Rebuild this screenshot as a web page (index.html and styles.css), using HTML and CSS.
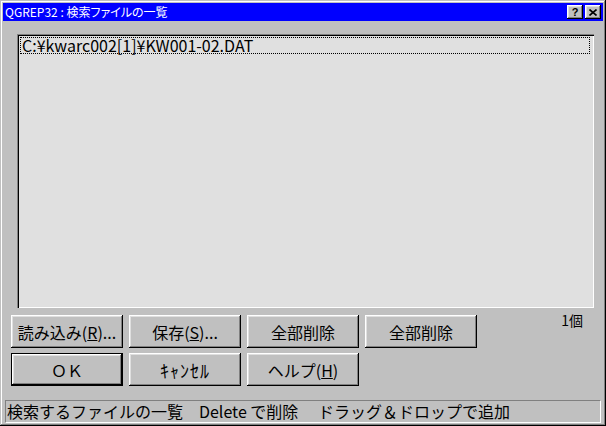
FILE: index.html
```html
<!DOCTYPE html>
<html lang="ja">
<head>
    <meta charset="UTF-8">
    <title>QGREP32 : 検索ファイルの一覧</title>
    <link rel="stylesheet" href="styles.css">
</head>
<body>
    <div class="window">
        <div class="titlebar">
            <span class="title">QGREP32 : 検索ファイルの一覧</span>
            <div class="caption-buttons">
                <span class="cap-btn cap-help">?</span>
                <span class="cap-btn">
                    <svg width="8" height="7" viewBox="0 0 8 7">
                        <path d="M0.5 0.5 L7.5 6.5 M7.5 0.5 L0.5 6.5" stroke="#000" stroke-width="1.6" fill="none"/>
                    </svg>
                </span>
            </div>
        </div>

        <div class="content">
            <ul class="file-list">
                <li class="focused">C:¥kwarc002[1]¥KW001-02.DAT</li>
            </ul>

            <div class="btn-row">
                <button class="btn">読み込み(<u>R</u>)...</button>
                <button class="btn">保存(<u>S</u>)...</button>
                <button class="btn">全部削除</button>
                <button class="btn">全部削除</button>
                <span class="count">1個</span>
            </div>
            <div class="btn-row btn-row-second">
                <button class="btn btn-default">ＯＫ</button>
                <button class="btn btn-hankaku">ｷｬﾝｾﾙ</button>
                <button class="btn">ヘルプ(<u>H</u>)</button>
            </div>
        </div>

        <div class="statusbar">検索するファイルの一覧　Delete で削除　 ドラッグ＆ドロップで追加</div>
    </div>
</body>
</html>
```

FILE: styles.css
```css
* {
    box-sizing: border-box;
}

body {
    margin: 0;
    font-family: "Noto Sans CJK JP", sans-serif;
    background-color: #c0c0c0;
    color: #000;
}

.window {
    width: 606px;
    height: 426px;
    padding: 3px;
    display: flex;
    flex-direction: column;
    background-color: #c0c0c0;
    box-shadow: inset -1px -1px #000, inset 1px 1px #c0c0c0,
                inset -2px -2px #808080, inset 2px 2px #fff;
}

/* title bar */
.titlebar {
    height: 18px;
    background-color: #0000ff;
    color: #fff;
    display: flex;
    align-items: center;
    justify-content: space-between;
    padding: 0 2px 0 2px;
}

.title {
    font-size: 12px;
    line-height: 18px;
    font-feature-settings: "palt";
}

.caption-buttons {
    display: flex;
    gap: 2px;
}

.cap-btn {
    width: 16px;
    height: 14px;
    display: flex;
    align-items: center;
    justify-content: center;
    background-color: #c0c0c0;
    box-shadow: inset -1px -1px #000, inset 1px 1px #fff,
                inset -2px -2px #808080, inset 2px 2px #dfdfdf;
}

.cap-help {
    color: #000;
    font: bold 11px "Liberation Sans", sans-serif;
    line-height: 14px;
}

/* list + buttons */
.content {
    padding: 13px 9px 0 8px;
}

.file-list {
    list-style: none;
    margin: 0 0 0 6px;
    padding: 3px 4px 2px 3px;
    height: 274px;
    background-color: #e0e0e0;
    box-shadow: inset 1px 1px #808080, inset 2px 2px #000,
                inset -1px -1px #fff, inset -2px -2px #dfdfdf;
}

.file-list li {
    height: 17px;
    padding-left: 1px;
    font-size: 16px;
    line-height: 15px;
    white-space: nowrap;
}

.file-list li.focused {
    border: 1px dotted #000;
}

.btn-row {
    display: flex;
    align-items: flex-start;
    gap: 6px;
    margin-top: 7px;
}

.btn-row-second {
    margin-top: 5px;
}

.btn {
    width: 112px;
    height: 33px;
    padding: 0;
    border: none;
    background-color: #c0c0c0;
    color: #000;
    font-family: "Noto Sans CJK JP", sans-serif;
    font-size: 16px;
    box-shadow: inset -1px -1px #000, inset 1px 1px #fff,
                inset -2px -2px #808080, inset 2px 2px #dfdfdf;
}

.btn-default {
    border: 1px solid #000;
}

.btn-hankaku {
    font-size: 18px;
    letter-spacing: 1px;
}

.count {
    margin-left: auto;
    margin-right: 11px;
    margin-top: -2px;
    font-size: 14px;
    line-height: 14px;
}

/* status bar */
.statusbar {
    margin: auto 2px 0;
    height: 23px;
    padding-left: 1px;
    border: 1px solid;
    border-color: #808080 #fff #fff #808080;
    font-size: 16px;
    line-height: 21px;
    white-space: pre;
}
```
